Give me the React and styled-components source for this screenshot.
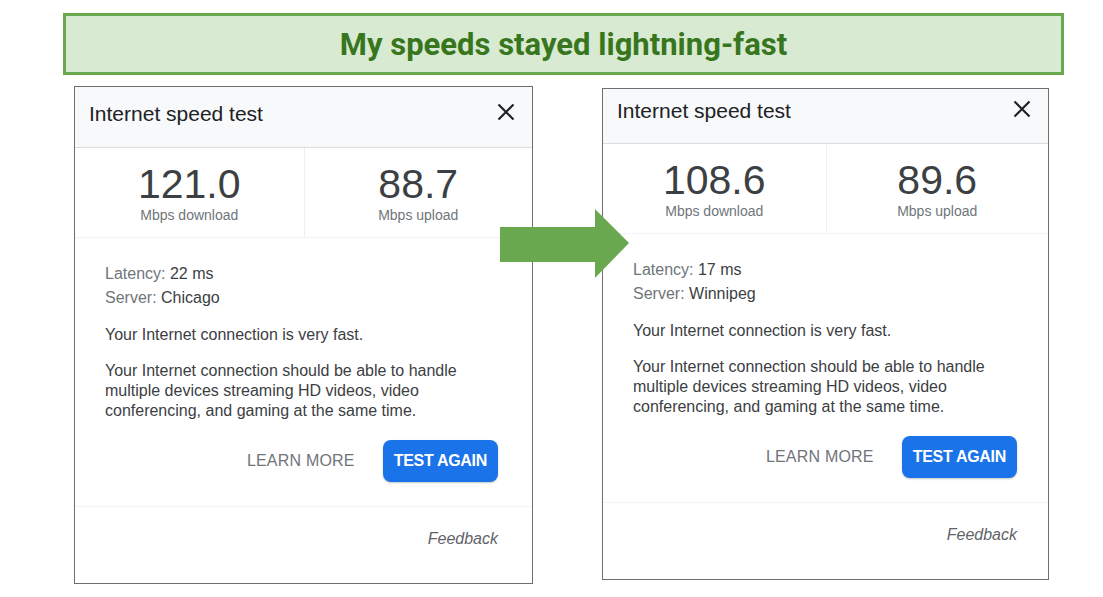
import styled, { createGlobalStyle } from 'styled-components'

const GlobalStyle = createGlobalStyle`
  body {
    margin: 0;
    background: #ffffff;
    font-family: "Liberation Sans", Arial, sans-serif;
  }
`

const Page = styled.div`
  width: 1103px;
  height: 597px;
  overflow: hidden;
  padding-top: 13px;
  box-sizing: border-box;
`

const Banner = styled.div`
  margin-left: 63px;
  width: 1001px;
  height: 62px;
  box-sizing: border-box;
  border: 3px solid #6aa84f;
  background-color: #d9ead3;
  display: flex;
  align-items: center;
  justify-content: center;
  padding-top: 2px;
`

const BannerTitle = styled.h1`
  margin: 0;
  font-family: Roboto, "Liberation Sans", sans-serif;
  font-size: 31px;
  line-height: 36px;
  font-weight: 700;
  color: #38761d;
`

const Row = styled.div`
  position: relative;
  display: flex;
  align-items: flex-start;
  gap: 69px;
  margin-top: 11px;
  padding-left: 74px;
`

const Arrow = styled.svg`
  position: absolute;
  left: 500px;
  top: 123px;
`

const Card = styled.div`
  width: ${p => p.$width}px;
  margin-top: ${p => p.$offset || 0}px;
  box-sizing: border-box;
  border: 1px solid #6e6e6e;
  background: #fff;
  display: flex;
  flex-direction: column;
`

const Header = styled.div`
  height: ${p => p.$height}px;
  box-sizing: border-box;
  background: #f8f9fa;
  border-bottom: 1px solid #dadce0;
  display: flex;
  align-items: center;
  justify-content: space-between;
  padding: 0 17px ${p => p.$lift}px 14px;
`

const Title = styled.div`
  font-size: 21px;
  color: #202124;
`

const Close = styled.svg`
  margin-bottom: 4px;
`

const Stats = styled.div`
  display: grid;
  grid-template-columns: 1fr 1fr;
  height: 90px;
  box-sizing: border-box;
  border-bottom: 1px solid #f1f3f4;
`

const Stat = styled.div`
  display: flex;
  flex-direction: column;
  align-items: center;
  justify-content: center;
  & + & {
    border-left: 1px solid #eeeff1;
  }
`

const Value = styled.div`
  font-size: 41px;
  line-height: 42px;
  color: #3c4043;
`

const Unit = styled.div`
  margin-top: 2px;
  font-size: 14px;
  line-height: 16px;
  color: #70757a;
`

const Body = styled.div`
  padding: 24px ${p => p.$pad}px 24px 30px;
  color: #3c4043;
  font-size: 16px;
`

const Meta = styled.div`
  line-height: 24px;
`

const Label = styled.span`
  color: #70757a;
`

const Text = styled.p`
  margin: ${p => p.$gap}px 0 0;
  line-height: ${p => p.$lh}px;
`

const Actions = styled.div`
  display: flex;
  justify-content: flex-end;
  align-items: center;
  gap: 28px;
  margin-top: 19px;
`

const LinkButton = styled.span`
  font-size: 16px;
  letter-spacing: 0.2px;
  color: #70757a;
`

const PrimaryButton = styled.span`
  height: 42px;
  box-sizing: border-box;
  padding: 0 11px;
  border-radius: 8px;
  background: #1a73e8;
  color: #fff;
  font-size: 16px;
  font-weight: 700;
  letter-spacing: -0.3px;
  display: flex;
  align-items: center;
  box-shadow: 0 1px 2px rgba(60, 64, 67, 0.3);
`

const Footer = styled.div`
  border-top: 1px solid #f3f4f5;
  padding: 22px ${p => p.$pad}px 34px 0;
  text-align: right;
  font-size: 16px;
  line-height: 20px;
  font-style: italic;
  color: #5f6368;
`

const CloseIcon = () => (
  <Close width="18" height="18" viewBox="0 0 18 18">
    <path d="M1.5 1.5 L16.5 16.5 M16.5 1.5 L1.5 16.5" stroke="#202124" strokeWidth="2.2" />
  </Close>
)

const SpeedCard = ({ width, offset, headerHeight, lift, pad, download, upload, latency, server }) => (
  <Card $width={width} $offset={offset}>
    <Header $height={headerHeight} $lift={lift}>
      <Title>Internet speed test</Title>
      <CloseIcon />
    </Header>
    <Stats>
      <Stat>
        <Value>{download}</Value>
        <Unit>Mbps download</Unit>
      </Stat>
      <Stat>
        <Value>{upload}</Value>
        <Unit>Mbps upload</Unit>
      </Stat>
    </Stats>
    <Body $pad={pad}>
      <Meta>
        <div><Label>Latency:</Label> {latency} ms</div>
        <div><Label>Server:</Label> {server}</div>
      </Meta>
      <Text $gap={13} $lh={24}>Your Internet connection is very fast.</Text>
      <Text $gap={14} $lh={20}>
        Your Internet connection should be able to handle multiple devices streaming HD videos, video
        conferencing, and gaming at the same time.
      </Text>
      <Actions>
        <LinkButton>LEARN MORE</LinkButton>
        <PrimaryButton>TEST AGAIN</PrimaryButton>
      </Actions>
    </Body>
    <Footer $pad={pad}>Feedback</Footer>
  </Card>
)

const App = () => {
  return (
    <>
      <GlobalStyle />
      <Page>
        <Banner>
          <BannerTitle>My speeds stayed lightning-fast</BannerTitle>
        </Banner>
        <Row>
          <SpeedCard width={459} headerHeight={61} lift={6} pad={34} download="121.0" upload="88.7" latency={22} server="Chicago" />
          <SpeedCard width={447} offset={2} headerHeight={55} lift={11} pad={31} download="108.6" upload="89.6" latency={17} server="Winnipeg" />
          <Arrow width="129" height="69" viewBox="0 0 129 69">
            <polygon points="0,18 95,18 95,0 129,34 95,69 95,53 0,53" fill="#6aa84f" />
          </Arrow>
        </Row>
      </Page>
    </>
  )
}

export default App
